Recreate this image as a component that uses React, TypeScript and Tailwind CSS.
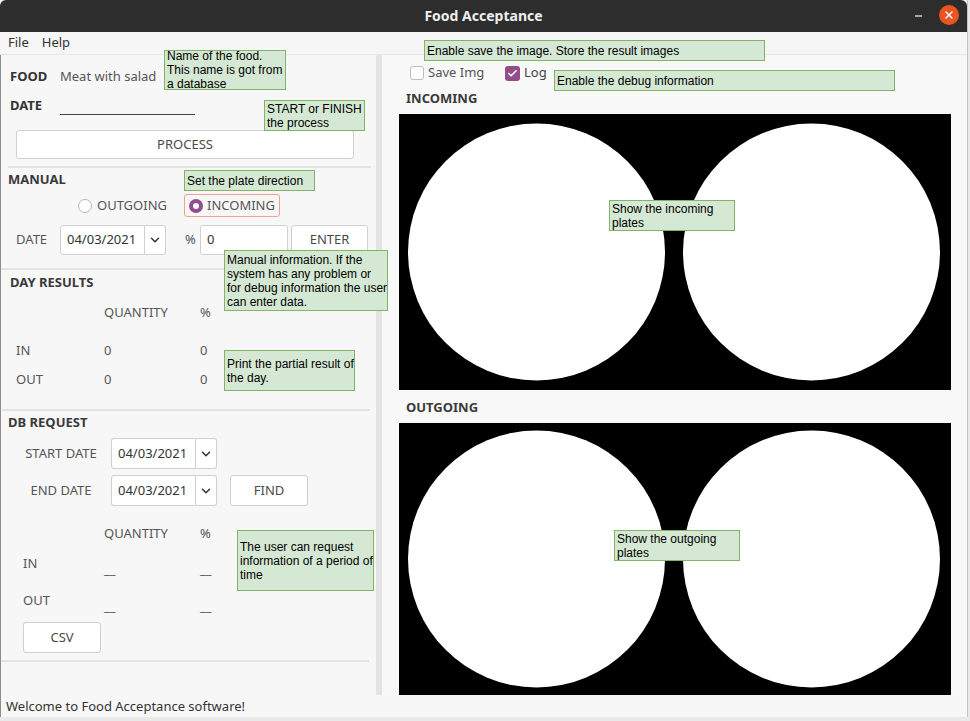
import {Check, ChevronDown, X} from 'lucide-react';
import type {ReactNode} from 'react';

function Note({className, children}: {className: string; children: ReactNode}) {
  return (
    <div
      className={`absolute flex items-center whitespace-nowrap border border-[#82b366] bg-[#d5e8d4] pl-[2px] font-['Liberation_Sans',Arial,sans-serif] text-[12px] leading-[14px] text-black ${className}`}
    >
      <div>{children}</div>
    </div>
  );
}

function Button({className, children}: {className: string; children: ReactNode}) {
  return (
    <div
      className={`flex items-center justify-center rounded-[3px] border border-[#d0d0d0] bg-white text-[13px] text-[#4a4a4a] ${className}`}
    >
      {children}
    </div>
  );
}

function DateField() {
  return (
    <div className="flex h-full">
      <div className="flex w-[85px] items-center rounded-l-[3px] border border-[#d0d0d0] bg-white pl-[6px] text-[13px] text-[#333]">
        04/03/2021
      </div>
      <div className="flex w-[21px] items-center justify-center rounded-r-[3px] border border-l-0 border-[#d0d0d0] bg-white">
        <ChevronDown size={14} strokeWidth={2.5} color="#333" />
      </div>
    </div>
  );
}

function Separator({className = ''}: {className?: string}) {
  return <div className={`h-[2px] bg-[#e3e3e3] ${className}`} />;
}

function Plates({height}: {height: number}) {
  const cy = height / 2;
  return (
    <svg width={552} height={height} className="block bg-black">
      <circle cx={137.5} cy={cy} r={128.5} fill="white" />
      <circle cx={412.5} cy={cy} r={128.5} fill="white" />
    </svg>
  );
}

function ResultRow({label, qty, pct, className}: {label: string; qty: string; pct: string; className: string}) {
  return (
    <div className={`flex h-[18px] items-center text-[13px] text-[#555] ${className}`}>
      <span className="w-[88px]">{label}</span>
      <span className="w-[96px]">{qty}</span>
      <span>{pct}</span>
    </div>
  );
}

export default function App() {
  return (
    <div className="relative h-[721px] w-[970px] overflow-hidden bg-[#e9e9e9] font-['Noto_Sans',sans-serif]">
      <div className="flex h-[717px] w-[968px] flex-col border-r border-[#c4c4c4] bg-[#f7f7f7]">
        {/* Title bar */}
        <div className="relative flex h-[32px] shrink-0 items-center justify-center rounded-t-[6px] bg-[#2d2d2d] pb-[2px]">
          <span className="text-[14px] font-bold text-[#efefef]">Food Acceptance</span>
          <span className="absolute right-[45px] top-[15px] h-[2px] w-[7px] bg-[#a8a8a8]" />
          <span className="absolute right-[8px] top-[5px] flex h-[20px] w-[20px] items-center justify-center rounded-full bg-[#e95420]">
            <X size={12} strokeWidth={3} color="white" />
          </span>
        </div>

        {/* Menu */}
        <div className="flex h-[23px] shrink-0 items-center gap-[13px] border-b border-[#e6e6e6] bg-[#f6f6f6] pl-[8px] text-[13px] text-[#333]">
          <span>File</span>
          <span>Help</span>
        </div>

        <div className="flex h-[640px] shrink-0 border-l border-[#8c8c8c]">
          {/* Left panel */}
          <div className="flex w-[375px] flex-col">
            <div className="mt-[11px] flex h-[22px] items-center pl-[9px] text-[13px]">
              <span className="w-[50px] font-bold text-[#333]">FOOD</span>
              <span className="text-[13px] text-[#555]">Meat with salad</span>
            </div>
            <div className="mt-[7px] flex h-[22px] pl-[9px] text-[13px]">
              <span className="flex w-[50px] items-center font-bold text-[#333]">DATE</span>
              <div className="h-[20px] w-[135px] border-b border-[#444]" />
            </div>
            <Button className="ml-[15px] mt-[13px] h-[29px] w-[338px]">PROCESS</Button>
            <Separator className="ml-[7px] mt-[7px] w-[363px]" />

            <div className="mt-[3px] flex h-[18px] items-center pl-[7px] text-[13px] font-bold text-[#3a3a3a]">MANUAL</div>
            <div className="mt-[5px] flex h-[23px] items-center pl-[77px] text-[13px] text-[#555]">
              <div className="flex w-[106px] items-center gap-[5px]">
                <span className="h-[14px] w-[14px] rounded-full border border-[#b8b8b8] bg-white" />
                <span>OUTGOING</span>
              </div>
              <div className="flex h-full items-center gap-[4px] rounded-[3px] border border-[#efa38d] px-[4px]">
                <span className="flex h-[14px] w-[14px] items-center justify-center rounded-full bg-[#924d8b]">
                  <span className="h-[6px] w-[6px] rounded-full bg-white" />
                </span>
                <span>INCOMING</span>
              </div>
            </div>
            <div className="mt-[8px] flex h-[30px] items-center pl-[15px] text-[13px] text-[#555]">
              <span className="w-[44px]">DATE</span>
              <DateField />
              <span className="ml-[19px] w-[15px]">%</span>
              <div className="flex h-full w-[88px] items-center rounded-[3px] border border-[#d0d0d0] bg-white pl-[6px] text-[#333]">
                0
              </div>
              <Button className="ml-[3px] h-full w-[77px]">ENTER</Button>
            </div>
            <Separator className="ml-[0px] mt-[13px] w-[376px]" />

            <div className="mt-[4px] flex h-[18px] items-center pl-[9px] text-[13px] font-bold text-[#3a3a3a]">DAY RESULTS</div>
            <ResultRow label="" qty="QUANTITY" pct="%" className="mt-[12px] pl-[15px]" />
            <ResultRow label="IN" qty="0" pct="0" className="mt-[20px] pl-[15px]" />
            <ResultRow label="OUT" qty="0" pct="0" className="mt-[11px] pl-[15px]" />
            <Separator className="ml-[1px] mt-[20px] w-[368px]" />

            <div className="mt-[3px] flex h-[18px] items-center pl-[7px] text-[13px] font-bold text-[#3a3a3a]">DB REQUEST</div>
            <div className="mt-[6px] flex h-[31px] items-center pl-[10px] text-[13px] text-[#555]">
              <span className="w-[100px] text-center">START DATE</span>
              <DateField />
            </div>
            <div className="mt-[6px] flex h-[31px] items-center pl-[10px] text-[13px] text-[#555]">
              <span className="w-[100px] text-center">END DATE</span>
              <DateField />
              <Button className="ml-[13px] h-full w-[78px]">FIND</Button>
            </div>
            <ResultRow label="" qty="QUANTITY" pct="%" className="mt-[19px] pl-[15px]" />
            <div className="mt-[12px] flex h-[18px] items-center pl-[22px] text-[13px] text-[#555]">
              <span className="w-[81px]">IN</span>
              <span className="w-[96px] pt-[10px] leading-none">__</span>
              <span className="pt-[10px] leading-none">__</span>
            </div>
            <div className="mt-[19px] flex h-[18px] items-center pl-[22px] text-[13px] text-[#555]">
              <span className="w-[81px]">OUT</span>
              <span className="w-[96px] pt-[10px] leading-none">__</span>
              <span className="pt-[10px] leading-none">__</span>
            </div>
            <Button className="ml-[22px] mt-[12px] h-[31px] w-[78px]">CSV</Button>
            <Separator className="mt-[7px] w-[368px]" />
          </div>

          {/* Splitter */}
          <div className="w-[6px] bg-[#e4e4e4]" />

          {/* Right panel */}
          <div className="flex flex-1 flex-col bg-[#f8f8f8]">
            <div className="mt-[10px] flex h-[16px] items-center pl-[28px] text-[13px] text-[#555]">
              <div className="flex w-[95px] items-center gap-[4px]">
                <span className="h-[14px] w-[14px] rounded-[3px] border border-[#bdbdbd] bg-white" />
                <span>Save Img</span>
              </div>
              <div className="flex items-center gap-[4px]">
                <span className="flex h-[15px] w-[15px] items-center justify-center rounded-[3px] bg-[#924d8b]">
                  <Check size={11} strokeWidth={3.5} color="white" />
                </span>
                <span className="text-[#444]">Log</span>
              </div>
            </div>
            <div className="mt-[10px] flex h-[16px] items-center pl-[24px] text-[13px] font-bold text-[#3a3a3a]">INCOMING</div>
            <div className="ml-[17px] mt-[7px]">
              <Plates height={276} />
            </div>
            <div className="mt-[10px] flex h-[16px] items-center pl-[24px] text-[13px] font-bold text-[#3a3a3a]">OUTGOING</div>
            <div className="ml-[17px] mt-[7px]">
              <Plates height={272} />
            </div>
          </div>
        </div>

        {/* Status bar */}
        <div className="flex h-[22px] shrink-0 items-center border-l border-[#8c8c8c] pl-[5px] pt-[1px] text-[13px] text-[#333]">
          Welcome to Food Acceptance software!
        </div>
      </div>

      <Note className="left-[164px] top-[50px] h-[40px] w-[122px]">
        Name of the food.
        <br />
        This name is got from
        <br />a database
      </Note>
      <Note className="left-[264px] top-[100px] h-[31px] w-[101px]">
        START or FINISH
        <br />
        the process
      </Note>
      <Note className="left-[424px] top-[40px] h-[21px] w-[341px]">Enable save the image. Store the result images</Note>
      <Note className="left-[554px] top-[70px] h-[21px] w-[341px]">Enable the debug information</Note>
      <Note className="left-[184px] top-[170px] h-[21px] w-[131px]">Set the plate direction</Note>
      <Note className="left-[609px] top-[200px] h-[31px] w-[126px]">
        Show the incoming
        <br />
        plates
      </Note>
      <Note className="left-[224px] top-[250px] h-[61px] w-[164px]">
        Manual information. If the
        <br />
        system has any problem or
        <br />
        for debug information the user
        <br />
        can enter data.
      </Note>
      <Note className="left-[224px] top-[350px] h-[41px] w-[131px]">
        Print the partial result of
        <br />
        the day.
      </Note>
      <Note className="left-[237px] top-[530px] h-[61px] w-[137px]">
        The user can request
        <br />
        information of a period of
        <br />
        time
      </Note>
      <Note className="left-[614px] top-[530px] h-[31px] w-[126px]">
        Show the outgoing
        <br />
        plates
      </Note>
    </div>
  );
}
